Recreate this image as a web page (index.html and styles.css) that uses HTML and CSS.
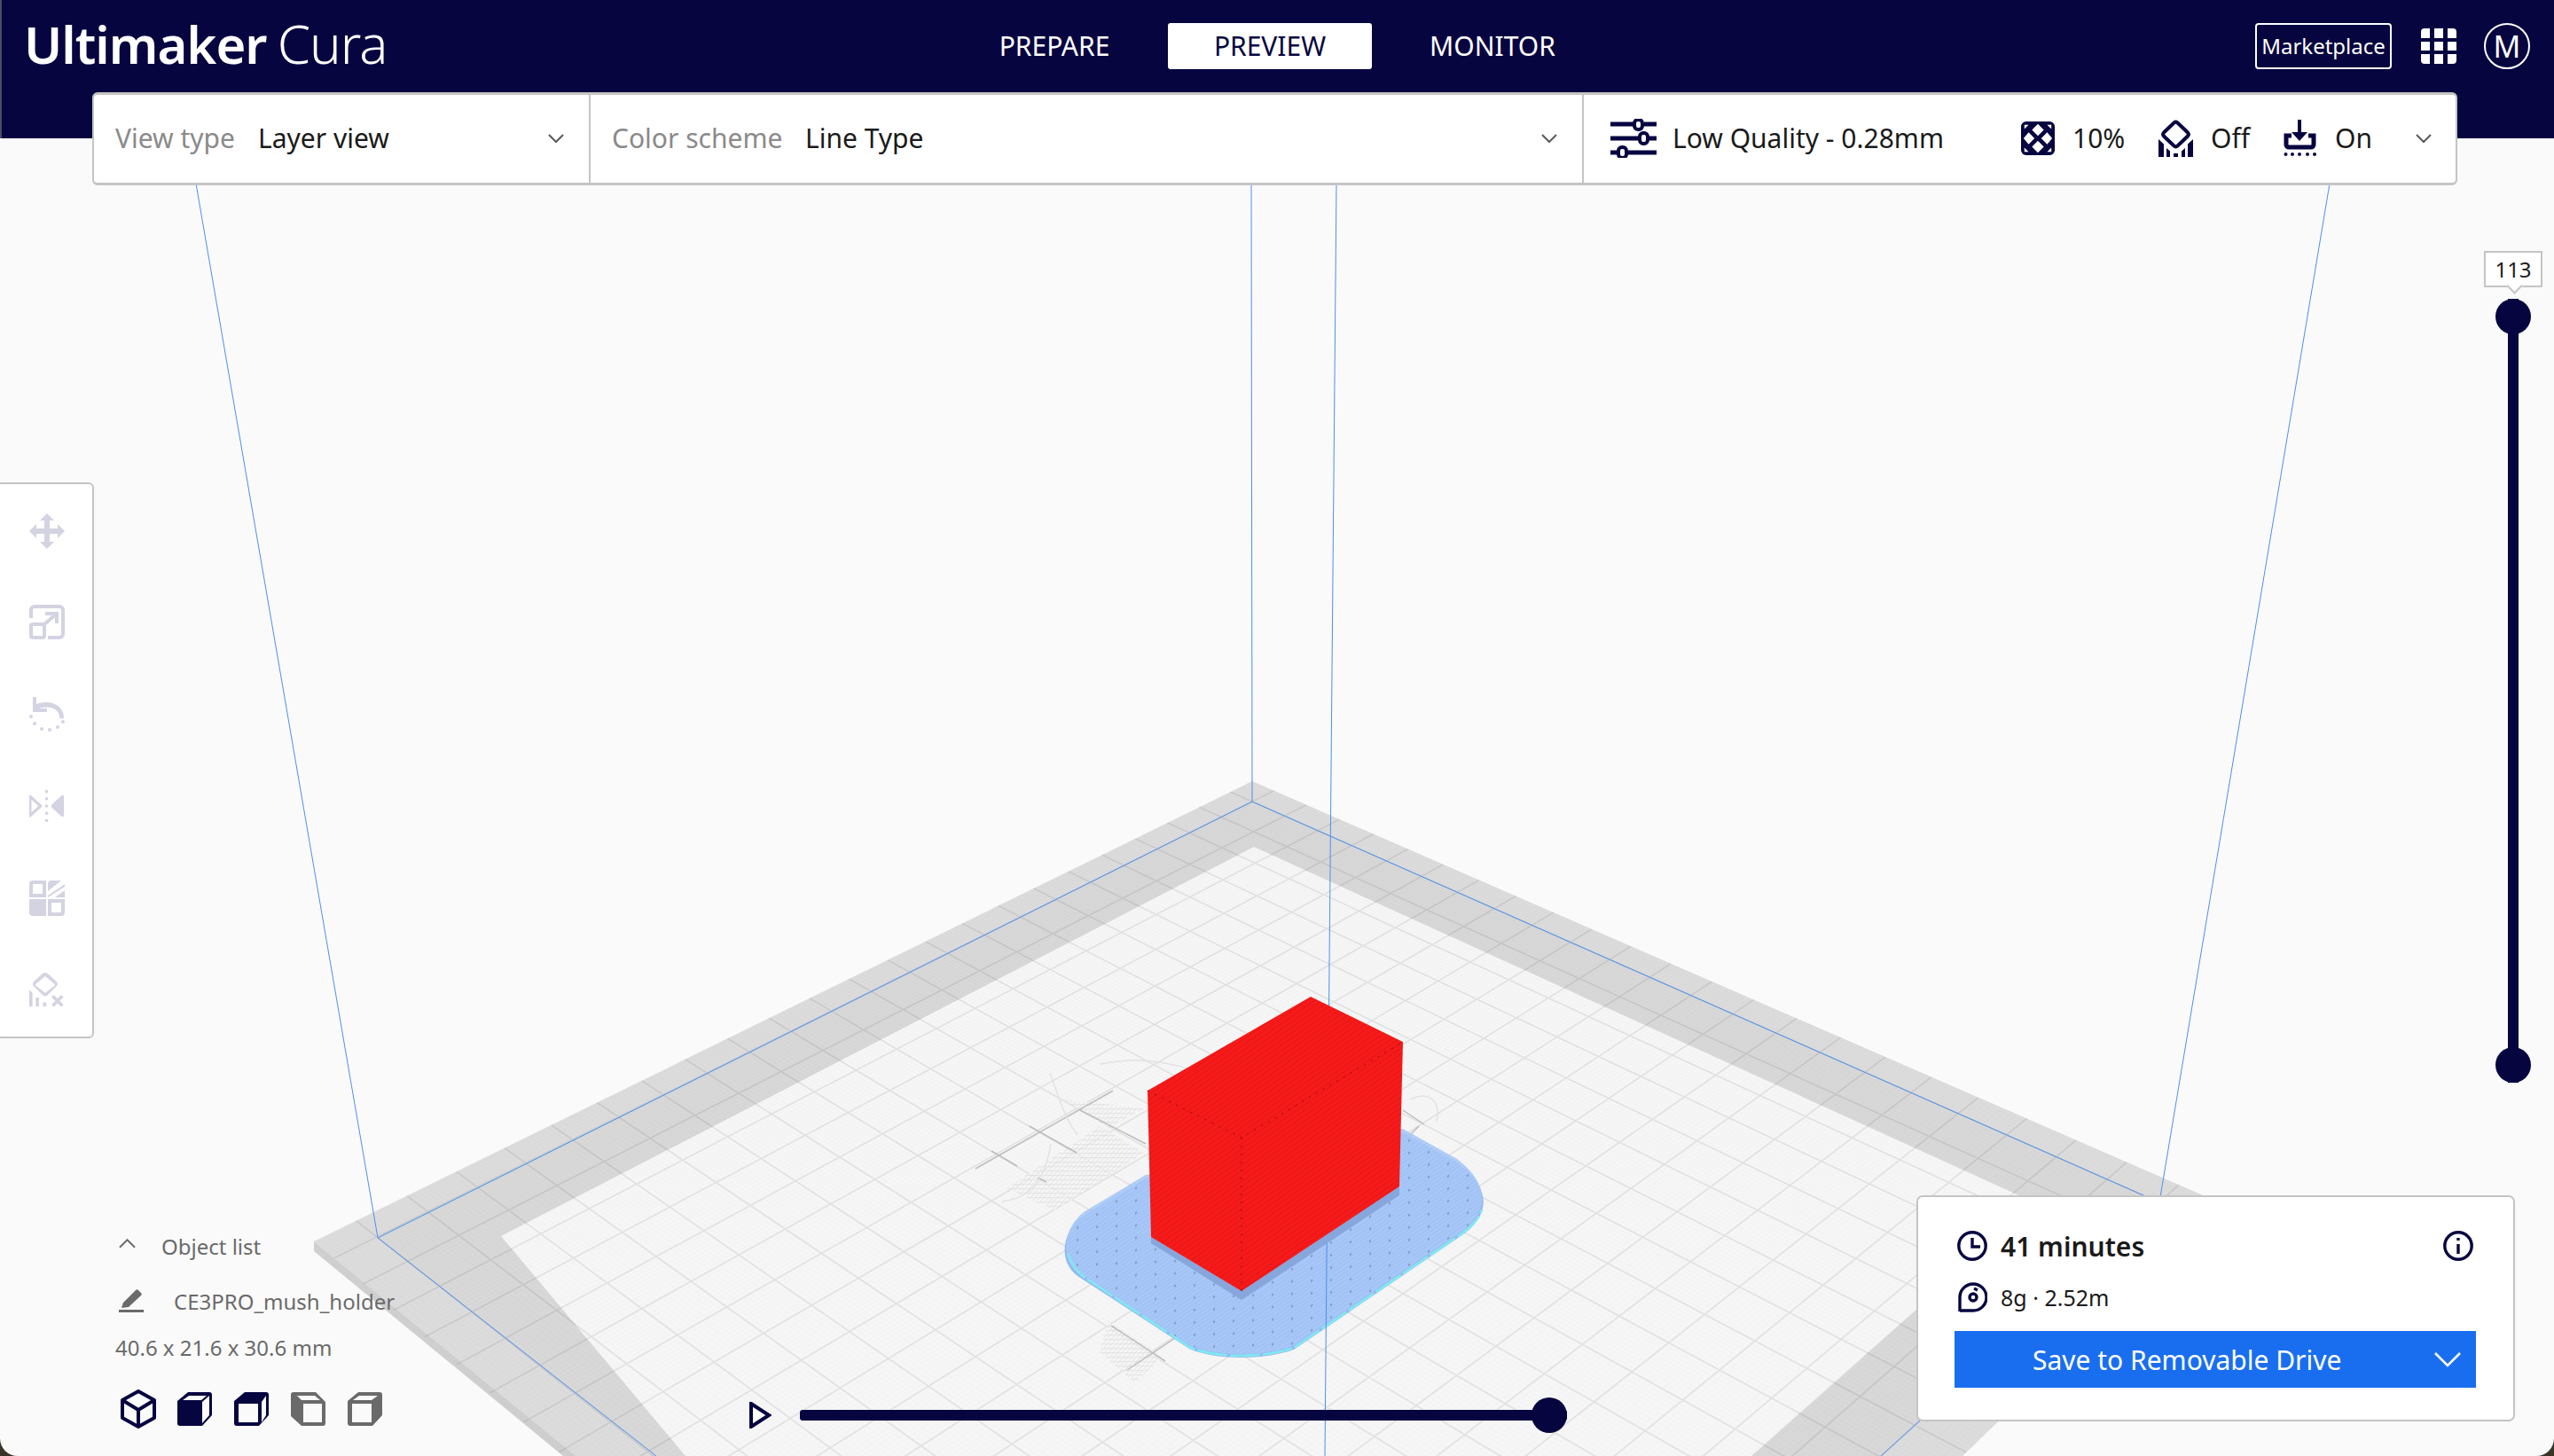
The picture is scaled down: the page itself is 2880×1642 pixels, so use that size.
FILE: index.html
```html
<!DOCTYPE html>
<html lang="en">
<head>
<meta charset="utf-8">
<title>Ultimaker Cura</title>
<link rel="stylesheet" href="styles.css">
</head>
<body>
<div class="app">
  <svg class="scene" viewBox="0 0 2880 1642" width="2880" height="1642" aria-hidden="true">
    <defs>
      <clipPath id="bedClip"><polygon points="1412,881 2507,1358 2213,1642 635,1642 354,1400"/></clipPath>
      <pattern id="brimDots" width="22" height="14" patternUnits="userSpaceOnUse" patternTransform="skewY(-34)">
        <rect width="22" height="14" fill="#a9c9f9"/>
        <rect y="3" width="22" height="1" fill="#9dbef0"/>
        <rect y="8" width="22" height="1" fill="#9dbef0"/>
        <rect y="12" width="22" height="1" fill="#9dbef0"/>
        <circle cx="5" cy="6" r="1" fill="#6f7f98"/>
      </pattern>
      <pattern id="redGrain" width="5" height="5" patternUnits="userSpaceOnUse" patternTransform="rotate(-35)">
        <rect width="5" height="5" fill="#f61a1a"/>
        <rect y="4" width="5" height="1" fill="#e51616"/>
      </pattern>
      <pattern id="hatch" width="5" height="5" patternUnits="userSpaceOnUse" patternTransform="skewX(-40)">
        <rect width="5" height="5" fill="#f6f6f6"/>
        <rect width="1" height="5" fill="#dcdcdc"/>
        <rect width="5" height="1" fill="#dcdcdc"/>
      </pattern>
    </defs>
    <polygon class="bed-side" points="354,1400 354,1411 635,1642 650,1642"/>
    <polygon class="bed-top" points="1412,881 2507,1358 2213,1642 650,1642 354,1400"/>
    <polygon class="bed-band" points="1412,904 2435,1356 2121,1642 737,1642 425,1395"/>
    <polygon class="bed-inner" points="1414,955 2296,1357 1975,1642 773,1642 565,1394"/>
    <g clip-path="url(#bedClip)">
      <path id="gridMinor" class="grid-minor" d=""/>
      <path id="gridMajor" class="grid-major" d=""/>
    </g>
    <path class="ghost-hatch" d="M1135 1340L1240 1270L1290 1300L1190 1365ZM1200 1240L1290 1250L1250 1272ZM1250 1490L1310 1530L1280 1560L1240 1525Z"/>
    <path class="ghost" d="M1100 1318L1255 1230M1161 1270L1214 1300M1118 1298L1147 1315M1170 1328L1180 1333M1218 1252L1292 1290M1253 1495L1314 1535M1271 1545L1349 1493M1582 1252L1606 1268M1600 1270L1585 1285"/>
    <path class="ghost-thin" d="M1184 1210C1195 1240 1200 1260 1215 1280M1240 1200C1290 1190 1320 1200 1340 1205M1185 1290C1180 1320 1170 1350 1130 1355M1590 1240C1610 1230 1625 1240 1620 1265"/>
    <path class="brim-edge" d="M1292 1329L1222 1371C1198 1388 1192 1421 1215 1439L1341 1521C1370 1534 1425 1534 1459 1522L1647 1394C1682 1371 1682 1339 1643 1311L1582 1277Z"/>
    <path class="brim" d="M1292 1325L1222 1367C1200 1385 1194 1415 1215 1435L1341 1517C1370 1530 1425 1530 1459 1518L1647 1390C1680 1367 1680 1335 1643 1307L1582 1273Z"/>
    <path class="brim-cyan" d="M1204 1414C1208 1426 1214 1434 1222 1440L1341 1519C1370 1532 1425 1532 1459 1520L1647 1392C1660 1383 1668 1374 1671 1364"/>
    <g class="build-lines">
      <path d="M221 207L426 1396L740 1642"/>
      <path d="M426 1396L1412 904L2435 1356L2121 1642"/>
      <path d="M1411 207L1412 904"/>
      <path d="M2627 207L2435 1356"/>
      <path d="M1507 207L1494 1642"/>
    </g>
    <polygon class="model-shadow" points="1298,1395 1400,1456 1578,1338 1578,1348 1400,1466 1298,1402"/>
    <polygon class="model" points="1478,1124 1582,1175 1578,1338 1400,1456 1298,1395 1294,1230"/>
    <path class="model-seam" d="M1294 1230L1400 1283L1582 1175M1400 1283V1456"/>
  </svg>

  <header class="topbar">
    <div class="logo"><span class="logo-bold">Ultimaker</span> <span class="logo-light">Cura</span></div>
    <nav class="tabs">
      <span class="tab">PREPARE</span>
      <span class="tab tab-active">PREVIEW</span>
      <span class="tab">MONITOR</span>
    </nav>
    <div class="account">
      <span class="marketplace">Marketplace</span>
      <svg class="apps" viewBox="0 0 40 40">
        <path d="M0 4a4 4 0 0 1 4-4h6v11H0zM15 0h10v11H15zM30 0h6a4 4 0 0 1 4 4v7H30zM0 15h10v10H0zM15 15h10v10H15zM30 15h10v10H30zM0 29h10v11H4a4 4 0 0 1-4-4zM15 29h10v11H15zM30 29h10v7a4 4 0 0 1-4 4h-6z"/>
      </svg>
      <span class="avatar">M</span>
    </div>
  </header>

  <div class="toolbar">
    <div class="tb-cell tb-view">
      <span class="tb-label">View type</span><span class="tb-value">Layer view</span>
      <svg class="chev" viewBox="0 0 20 12"><path d="M2 2l8 8 8-8"/></svg>
    </div>
    <div class="tb-cell tb-color">
      <span class="tb-label">Color scheme</span><span class="tb-value">Line Type</span>
      <svg class="chev" viewBox="0 0 20 12"><path d="M2 2l8 8 8-8"/></svg>
    </div>
    <div class="tb-cell tb-print">
      <svg class="ico-sliders" viewBox="0 0 52 44">
        <path d="M0 6h26M38 6h14M0 22h32M44 22h8M0 38h8M20 38h32" class="sl-bar"/>
        <rect class="sl-knob" x="27" y="1" width="9" height="11" rx="4"/>
        <rect class="sl-knob" x="33" y="16" width="9" height="12" rx="4"/>
        <rect class="sl-knob" x="9" y="32" width="9" height="12" rx="4"/>
      </svg>
      <span class="tb-value quality">Low Quality - 0.28mm</span>
      <svg class="ico-infill" viewBox="0 0 40 40">
        <rect width="40" height="40" rx="6" fill="#070540"/>
        <path fill="#fff" d="M20 3l7 7-7 7-7-7zM9 13l7 7-7 7-6-7zM31 13l6 7-6 7-7-7zM20 23l7 7-7 7-7-7zM4 4h5L4 9zM36 4v5L31 4zM4 36v-5l5 5zM36 36h-5l5-5z"/>
      </svg>
      <span class="tb-value pct">10%</span>
      <svg class="ico-support" viewBox="0 0 40 42">
        <path class="ol" d="M17.500 3.500a3 3 0 0 1 4 0L33 14.500a3 3 0 0 1 0 4L21.500 29.500a3 3 0 0 1-4 0L6 18.500a3 3 0 0 1 0-4Z"/>
        <path class="fl" d="M0 22l6 5.500V42H0zM9 32l4 3.500V42H9zM17 38h5v4h-5zM26 35.500l4-3.500V42h-4zM33 27.500l6-5.500V42h-6z"/>
      </svg>
      <span class="tb-value off">Off</span>
      <svg class="ico-adhesion" viewBox="0 0 38 42">
        <path class="fl" d="M16 0h4v14h7l-9 10-9-10h7z"/>
        <path class="tray" d="M9 18H3v10a3 3 0 0 0 3 3h25a3 3 0 0 0 3-3V18h-6"/>
        <circle class="fl" cx="2.500" cy="39" r="2"/><circle class="fl" cx="10" cy="39" r="2"/><circle class="fl" cx="18" cy="39" r="2"/><circle class="fl" cx="27" cy="39" r="2"/><circle class="fl" cx="35" cy="39" r="2"/>
      </svg>
      <span class="tb-value on">On</span>
      <svg class="chev chev-end" viewBox="0 0 20 12"><path d="M2 2l8 8 8-8"/></svg>
    </div>
  </div>

  <aside class="tools">
    <svg class="tool" viewBox="0 0 40 40"><path d="M20 0l8 8h-5v9h9v-5l8 8-8 8v-5h-9v9h5l-8 8-8-8h5v-9H8v5l-8-8 8-8v5h9V8h-5z"/></svg>
    <svg class="tool tool-line" viewBox="0 0 40 40"><path d="M2 15V6a4 4 0 0 1 4-4h28a4 4 0 0 1 4 4v27a4 4 0 0 1-4 4H21"/><rect x="2" y="22" width="15" height="15" rx="2"/><path d="M17 22L31 10M18 10H31V21"/></svg>
    <svg class="tool" viewBox="0 0 40 40"><path d="M4 0h4v8c10-4 29-3 31 14a2.400 2.400 0 0 1-5 0c-1-11-15-12-23-9h9v4H4z"/><circle cx="2" cy="22" r="2"/><circle cx="6" cy="30" r="2"/><circle cx="14" cy="36" r="2"/><circle cx="23" cy="37" r="2"/><circle cx="32" cy="34" r="2"/><circle cx="38" cy="28" r="2"/></svg>
    <svg class="tool" viewBox="0 0 44 40"><path d="M1 8L14 20 1 32Z" fill="none" stroke="#d3d3e2" stroke-width="3.500" stroke-linejoin="round"/><path d="M43 9c0-2-1-3-3-2L28 18c-1 1-1 3 0 4l12 11c2 1 3 0 3-2z"/><circle cx="21.500" cy="2" r="2"/><circle cx="21.500" cy="11" r="2"/><circle cx="21.500" cy="20" r="2"/><circle cx="21.500" cy="29" r="2"/><circle cx="21.500" cy="38" r="2"/></svg>
    <svg class="tool" viewBox="0 0 40 40"><path d="M4 0h15v19H0V4a4 4 0 0 1 4-4zM4 4v11h11V4zM0 21h19v19H4a4 4 0 0 1-4-4zM21 21h19v15a4 4 0 0 1-4 4H21zM25 25v11h11V25zM30 0h6L21 12V4a4 4 0 0 1 4-4zM40 4v3L21 19v-2zM40 11v8H29z"/></svg>
    <svg class="tool" viewBox="0 0 44 42"><path d="M19.700 0c1 0 2 .3 3 1l11 10c2 2 2 4 0 6l-11 11c-2 1.500-4 1.500-6 0L5.700 17c-2-2-2-4 0-6l11-10c1-.7 2-1 3-1zM19.700 4.500L8 14c-.5.700-.5 1.500 0 2l11.700 9L31.500 16c.5-.5.500-1.300 0-2z"/><path d="M0 21l4 4v17H0zM8 31h4v11H8zM17 37h4v5h-4z"/><path d="M29 29l12 12M41 29L29 41" fill="none" stroke="#d3d3e2" stroke-width="4"/></svg>
  </aside>

  <section class="object-info">
    <div class="obj-head">
      <svg class="obj-chev" viewBox="0 0 20 11"><path d="M1 10l9-9 9 9"/></svg>
      <span>Object list</span>
    </div>
    <div class="obj-name">
      <svg class="obj-pencil" viewBox="0 0 28 28"><path d="M0 24h28v3H0zM5 16L19 2c1-1 2-1 3 0l3 3c1 1 1 2 0 3L11 21l-8 1z"/></svg>
      <span>CE3PRO_mush_holder</span>
    </div>
    <div class="obj-dims">40.6 x 21.6 x 30.6 mm</div>
    <div class="obj-views">
      <svg class="cube cube-on" viewBox="0 0 40 44"><path class="cube-ol" d="M20 2L38 12V32L20 42 2 32V12ZM2 12L20 23 38 12M20 23V42"/></svg>
      <svg class="cube cube-on" viewBox="0 0 40 40"><path d="M12 1H36a3 3 0 0 1 3 3V27L28 39H3a3 3 0 0 1-3-3V11ZM28 12V36L36 27V5ZM13 5L6 10H27L33 5Z" fill-rule="evenodd"/></svg>
      <svg class="cube cube-on" viewBox="0 0 40 40"><path d="M12 1H36a3 3 0 0 1 3 3V27L28 39H3a3 3 0 0 1-3-3V11ZM27 14H5V35H27ZM31 12V35L36 27V5Z" fill-rule="evenodd"/></svg>
      <svg class="cube cube-off" viewBox="0 0 40 40"><path d="M4 1H28L39 12V36a3 3 0 0 1-3 3H12L0 28V4a3 3 0 0 1 3-3ZM14 14V35H35V14ZM27 5H7L12 10H33Z" fill-rule="evenodd"/></svg>
      <svg class="cube cube-off" viewBox="0 0 40 40"><path d="M12 1H36a3 3 0 0 1 3 3V27L28 39H3a3 3 0 0 1-3-3V11ZM27 14H5V35H27ZM13 5L6 10H27L34 5Z" fill-rule="evenodd"/></svg>
    </div>
  </section>

  <div class="play-slider">
    <svg class="play" viewBox="0 0 25 30"><path d="M2 2L22 15 2 28Z"/></svg>
    <div class="h-track"><span class="h-thumb"></span></div>
  </div>

  <div class="layer-slider">
    <div class="layer-tip">113</div>
    <div class="v-track"><span class="v-thumb"></span><span class="v-thumb"></span></div>
  </div>

  <section class="summary">
    <div class="sum-row sum-time">
      <svg class="sum-ico" viewBox="0 0 34 34"><circle cx="17" cy="17" r="15.200"/><path d="M17 8v10h9"/></svg>
      <strong>41 minutes</strong>
      <svg class="sum-ico sum-info" viewBox="0 0 34 34"><circle cx="17" cy="17" r="15.200"/><path d="M17 15v11M17 8v3"/></svg>
    </div>
    <div class="sum-row sum-mat">
      <svg class="sum-ico" viewBox="0 0 34 34"><path d="M3 33V17a15 15 0 1 1 15 15H3"/><circle cx="18" cy="17" r="4"/><path d="M19 7l4 2"/></svg>
      <span>8g · 2.52m</span>
    </div>
    <button class="save">
      <span class="save-text">Save to Removable Drive</span>
      <svg class="save-chev" viewBox="0 0 30 17"><path d="M1 1l14 14L29 1"/></svg>
    </button>
  </section>
</div>
<script src="grid.js"></script>
</body>
</html>
```

FILE: styles.css
```css
* { box-sizing: border-box; }
html, body { margin: 0; padding: 0; height: 100%; background: #3a3328; overflow: hidden; }
body { font-family: "Noto Sans", "Open Sans", sans-serif; color: #1a1a1a; }

.app {
  position: relative;
  width: 2880px;
  height: 1642px;
  background: #fafafa;
  border-radius: 0 0 20px 20px;
  overflow: hidden;
}

/* 3D viewport */
.scene { position: absolute; inset: 0; display: block; }
.bed-side { fill: #cfcfcf; }
.bed-top { fill: #dcdcdc; }
.bed-band { fill: #d8d8d8; }
.bed-inner { fill: #f6f6f6; }
.grid-major { fill: none; stroke: #000; stroke-opacity: .065; stroke-width: 2; }
.grid-minor { fill: none; stroke: #000; stroke-opacity: .016; stroke-width: 1; }
.ghost { fill: none; stroke: #bdbdbd; stroke-width: 1.500; }
.ghost-hatch { fill: url(#hatch); opacity: .7; }
.ghost-thin { fill: none; stroke: #e2e2e2; stroke-width: 1.500; }
.brim-edge { fill: #96b8ee; }
.brim { fill: url(#brimDots); opacity: .88; }
.brim-cyan { fill: none; stroke: #7eeaf0; stroke-width: 2.500; stroke-dasharray: 34 3; }
.build-lines path { fill: none; stroke: #4a90f0; stroke-width: 1; }
.model-shadow { fill: #86a6dc; }
.model { fill: url(#redGrain); }
.model-seam { fill: none; stroke: #8a0f0f; stroke-width: 1; stroke-dasharray: 2 7; }

/* Header */
.topbar {
  position: relative;
  display: grid;
  grid-template-columns: 1fr auto 1fr;
  align-items: center;
  height: 156px;
  padding: 0 27px 53px 25px;
  background: #070540;
  border-left: 2px solid #4a4a66;
  color: #fff;
}
.logo { font-size: 58px; line-height: 1; white-space: nowrap; letter-spacing: -1px; margin-top: -5px; }
.logo-bold { font-weight: 600; }
.logo-light { font-weight: 300; font-size: 60px; margin-left: -2px; }
.tabs { display: flex; align-items: center; margin-left: -8px; }
.tab {
  display: flex;
  align-items: center;
  justify-content: center;
  height: 52px;
  width: 230px;
  font-size: 30px;
}
.tab:first-child { margin-right: 13px; }
.tab:last-child { margin-left: 21px; }
.tab-active { background: #fff; color: #070540; border-radius: 3px; }
.account { display: flex; justify-content: flex-end; align-items: center; }
.marketplace {
  width: 154px;
  height: 52px;
  display: flex;
  align-items: center;
  justify-content: center;
  border: 2px solid #fff;
  border-radius: 4px;
  font-size: 24px;
}
.apps { width: 40px; height: 40px; margin-left: 33px; fill: #fff; }
.avatar {
  width: 52px;
  height: 52px;
  margin-left: 31px;
  display: flex;
  align-items: center;
  justify-content: center;
  border: 2.500px solid #fff;
  border-radius: 50%;
  font-size: 34px;
}

/* Stage toolbar */
.toolbar {
  position: absolute;
  left: 104px;
  top: 104px;
  width: 2667px;
  height: 105px;
  display: flex;
  background: #fff;
  border: 2px solid #c4c4c4;
  border-top-width: 3px;
  border-bottom-width: 3px;
  border-radius: 6px;
}
.tb-cell { display: flex; align-items: center; height: 100%; }
.tb-view { width: 560px; padding: 0 0 2px 24px; border-right: 2px solid #c4c4c4; }
.tb-color { width: 1120px; padding: 0 0 2px 24px; border-right: 2px solid #c4c4c4; }
.tb-print { flex: 1; padding: 0 0 2px 30px; }
.tb-label { font-size: 30px; color: #8a8a8a; width: 161px; white-space: nowrap; }
.tb-color .tb-label { width: 218px; }
.tb-value { font-size: 30px; color: #1a1a1a; white-space: nowrap; }
.chev { width: 20px; height: 12px; margin-left: auto; margin-right: 27px; fill: none; stroke: #5a5a5a; stroke-width: 2; }
.chev-end { margin-right: 26px; }
.ico-sliders { width: 52px; height: 44px; flex: none; }
.sl-bar { fill: none; stroke: #070540; stroke-width: 5; }
.sl-knob { fill: #fff; stroke: #070540; stroke-width: 4; }
.quality { margin-left: 18px; width: 393px; }
.ico-infill { width: 38px; height: 40px; flex: none; }
.pct { margin-left: 20px; width: 58px; }
.ico-support { width: 40px; height: 42px; flex: none; margin-left: 39px; }
.off { margin-left: 19px; width: 44px; }
.ico-adhesion { width: 38px; height: 42px; flex: none; margin-left: 38px; }
.on { margin-left: 20px; }
.ol { fill: none; stroke: #070540; stroke-width: 4; }
.fl { fill: #070540; }
.tray { fill: none; stroke: #070540; stroke-width: 5; }

/* Left tools */
.tools {
  position: absolute;
  left: -4px;
  top: 544px;
  width: 110px;
  height: 627px;
  display: flex;
  flex-direction: column;
  align-items: center;
  justify-content: space-between;
  padding: 33px 0 33px 4px;
  background: #fff;
  border: 2px solid #c4c4c4;
  border-radius: 6px;
}
.tool { width: 40px; height: 40px; fill: #d3d3e2; }
.tool-line { fill: none; stroke: #d3d3e2; stroke-width: 4; }

/* Object information */
.object-info { position: absolute; left: 130px; top: 1386px; width: 340px; color: #6a6a6a; }
.obj-head { display: flex; align-items: center; height: 38px; font-size: 24px; padding-left: 4px; }
.obj-chev { width: 19px; height: 11px; fill: none; stroke: #6a6a6a; stroke-width: 2; margin-right: 29px; margin-top: -6px; }
.obj-name { display: flex; align-items: center; height: 38px; margin-top: 24px; font-size: 24px; padding-left: 4px; }
.obj-pencil { width: 28px; height: 28px; fill: #6a6a6a; margin-right: 34px; }
.obj-dims { margin-top: 15px; height: 38px; line-height: 38px; font-size: 24px; }
.obj-views { display: flex; gap: 24px; margin-top: 28px; padding-left: 6px; }
.cube { width: 40px; height: 44px; }
.cube-on { fill: #070540; }
.cube-off { fill: #6a6a6a; }
.cube-ol { fill: none; stroke: #070540; stroke-width: 4; stroke-linejoin: round; }

/* Horizontal path slider */
.play-slider { position: absolute; left: 845px; top: 1576px; width: 922px; height: 40px; display: flex; align-items: center; gap: 32px; }
.play { width: 25px; height: 30px; fill: #fff; stroke: #070540; stroke-width: 4; flex: none; }
.h-track { position: relative; flex: 1; height: 12px; background: #070540; border-radius: 3px; }
.h-thumb { position: absolute; right: 0; top: -14px; width: 40px; height: 40px; background: #070540; border-radius: 50%; }

/* Vertical layer slider */
.layer-slider { position: absolute; left: 2801px; top: 283px; width: 66px; height: 938px; display: flex; flex-direction: column; align-items: center; }
.layer-tip {
  position: relative;
  width: 66px;
  height: 41px;
  flex: none;
  display: flex;
  align-items: center;
  justify-content: center;
  background: #fff;
  border: 2px solid #c4c4c4;
  font-size: 24px;
  color: #1a1a1a;
}
.layer-tip::after {
  content: "";
  position: absolute;
  left: 50%;
  bottom: -7px;
  width: 11px;
  height: 11px;
  margin-left: -5.500px;
  background: #fff;
  border-right: 2px solid #c4c4c4;
  border-bottom: 2px solid #c4c4c4;
  transform: rotate(45deg);
}
.v-track { position: relative; width: 12px; margin-top: 13px; height: 884px; background: linear-gradient(#070540, #070540) center / 12px 100% no-repeat; display: flex; flex-direction: column; align-items: center; justify-content: space-between; }
.v-thumb { width: 40px; height: 40px; flex: none; background: #070540; border-radius: 50%; }

/* Print summary */
.summary {
  position: absolute;
  left: 2161px;
  top: 1348px;
  width: 675px;
  height: 255px;
  padding: 0 45px 0 41px;
  background: #fff;
  border: 2.500px solid #c4c4c4;
  border-radius: 7px;
}
.sum-row { display: flex; align-items: center; }
.sum-time { height: 34px; margin-top: 38px; font-size: 30px; }
.sum-time strong { font-weight: 600; margin-left: 15px; }
.sum-mat { height: 34px; margin-top: 24px; font-size: 25px; }
.sum-mat span { margin-left: 15px; }
.sum-ico { width: 34px; height: 34px; fill: none; stroke: #070540; stroke-width: 3.400; flex: none; margin-left: 3px; }
.sum-info { margin-left: auto; margin-right: 0; }
.save {
  position: relative;
  display: flex;
  align-items: center;
  justify-content: flex-start;
  width: 588px;
  height: 64px;
  margin-top: 21px;
  padding: 0 0 0 88px;
  border: 0;
  background: #196ef0;
  color: #fff;
  font-family: inherit;
  font-size: 30px;
}
.save-chev { position: absolute; right: 17px; top: 24px; width: 30px; height: 17px; fill: none; stroke: #fff; stroke-width: 2.600; }
```

FILE: grid.js
```js
// Projects the build plate's 10 mm and 1 mm grids through the camera's perspective.
(function () {
  var A = [1412, 904], R = [2435, 1356], F = [1478, 2229], L = [425, 1395];
  var dx1 = R[0] - F[0], dx2 = L[0] - F[0], sx = A[0] - R[0] + F[0] - L[0];
  var dy1 = R[1] - F[1], dy2 = L[1] - F[1], sy = A[1] - R[1] + F[1] - L[1];
  var den = dx1 * dy2 - dx2 * dy1;
  var g = (sx * dy2 - dx2 * sy) / den, h = (dx1 * sy - sx * dy1) / den;
  var a = R[0] - A[0] + g * R[0], b = L[0] - A[0] + h * L[0], c = A[0];
  var d = R[1] - A[1] + g * R[1], e = L[1] - A[1] + h * L[1], f = A[1];
  function project(u, v) {
    var w = g * u + h * v + 1;
    return ((a * u + b * v + c) / w).toFixed(1) + ' ' + ((d * u + e * v + f) / w).toFixed(1);
  }
  function lines(n, from, to) {
    var out = [];
    for (var i = from; i <= to; i++) {
      var t = i / n;
      out.push('M' + project(t, -0.1) + 'L' + project(t, 1.1));
      out.push('M' + project(-0.1, t) + 'L' + project(1.1, t));
    }
    return out.join('');
  }
  document.getElementById('gridMajor').setAttribute('d', lines(22, -2, 24));
  document.getElementById('gridMinor').setAttribute('d', lines(220, -20, 240));
})();
```
